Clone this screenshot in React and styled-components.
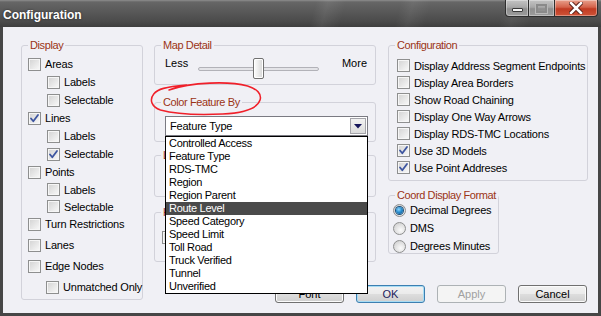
import React from 'react';
import styled, { createGlobalStyle } from 'styled-components';

const GlobalStyle = createGlobalStyle`
  html, body {
    margin: 0;
    padding: 0;
    background: #ffffff;
  }
  body {
    font-family: "Liberation Sans", Arial, sans-serif;
    font-size: 11px;
    color: #000;
  }
`;

const Window = styled.div`
  width: 601px;
  height: 316px;
  box-sizing: border-box;
  display: flex;
  flex-direction: column;
  background: #464646;
  overflow: hidden;
`;

const TitleBar = styled.div`
  height: 27px;
  flex: none;
  display: flex;
  justify-content: space-between;
  align-items: flex-start;
  background:
    linear-gradient(105deg, transparent 52%, rgba(255,255,255,0.07) 54%, transparent 57%,
      transparent 66%, rgba(255,255,255,0.06) 68%, transparent 71%,
      transparent 83%, rgba(255,255,255,0.05) 85%, transparent 88%),
    linear-gradient(to bottom, #8e8e8e 0px, #666 2px, #585858 12px, #4a4a4a 22px, #3e3e3e 27px);
`;

const Title = styled.span`
  margin: 8px 0 0 3px;
  font-size: 12px;
  font-weight: bold;
  line-height: 14px;
  color: #fff;
  text-shadow: 0 0 2px #222;
`;

const CaptionGroup = styled.div`
  display: flex;
  margin-right: 3px;
`;

const captionBg = {
  min: 'linear-gradient(to bottom, #c4c4c4 0%, #a8a8a8 45%, #8e8e8e 55%, #9c9c9c 100%)',
  max: 'linear-gradient(to bottom, #c4c4c4 0%, #a8a8a8 45%, #8e8e8e 55%, #9c9c9c 100%)',
  close: 'linear-gradient(to bottom, #e8a08c 0%, #d4624a 45%, #c03a22 55%, #d05438 100%)',
};

const CaptionButton = styled.div`
  width: ${p => p.$w}px;
  height: 17px;
  box-sizing: border-box;
  border: 1px solid #2e2e2e;
  border-top: none;
  border-left-width: ${p => (p.$kind === 'min' ? 1 : 0)}px;
  border-radius: ${p => (p.$kind === 'min' ? '0 0 0 4px' : p.$kind === 'close' ? '0 0 4px 0' : '0')};
  background: ${p => captionBg[p.$kind]};
  box-shadow: inset 0 0 0 1px rgba(255,255,255,0.35);
  display: flex;
  align-items: center;
  justify-content: center;
`;

const MinGlyph = styled.span`
  width: 11px;
  height: 4px;
  margin-top: 3px;
  box-sizing: border-box;
  background: #f4f4f4;
  border: 1px solid #3a3a3a;
  border-radius: 1px;
`;

const MaxGlyph = styled.span`
  width: 11px;
  height: 9px;
  box-sizing: border-box;
  border: 2px solid #8a8a8a;
  box-shadow: 0 0 0 1px #b8b8b8;
`;

const Body = styled.div`
  flex: 1;
  margin: 0 3px 3px;
  background: #f0f0f5;
  display: flex;
  gap: 11px;
  padding: 12px 10px 10px 18px;
  box-sizing: border-box;
`;

/* legend text sits 9px in from the group's left border, whatever the padding */
const Group = styled.fieldset`
  position: relative;
  margin: 0;
  margin-top: ${p => p.$mt || 0}px;
  padding: ${p => p.$pt || 0}px 6px 0 ${p => p.$pl}px;
  width: ${p => p.$w}px;
  height: ${p => p.$h}px;
  min-width: 0;
  box-sizing: border-box;
  border: 1px solid #d2d2da;
  border-radius: 3px;
  flex: none;

  legend {
    margin-left: ${p => 6 - p.$pl}px;
    padding: 0 2px;
    line-height: 12px;
    color: #9b3415;
    white-space: nowrap;
    letter-spacing: -0.4px;
  }
`;

const Column = styled.div`
  position: relative;
  display: flex;
  flex-direction: column;
  width: ${p => p.$w}px;
`;

const RightArea = styled.div`
  display: flex;
  flex-direction: column;
  width: 434px;
`;

const Columns = styled.div`
  display: flex;
  gap: 12px;
`;

const Row = styled.label`
  display: flex;
  align-items: center;
  gap: 4px;
  height: ${p => p.$h || 18}px;
  margin-top: ${p => p.$mt || 0}px;
  padding-left: ${p => p.$indent || 0}px;
  white-space: nowrap;
  letter-spacing: -0.2px;
`;

const Box = styled.span`
  width: 13px;
  height: 13px;
  flex: none;
  box-sizing: border-box;
  border: 1px solid #8e8f8f;
  background: linear-gradient(135deg, #d2d2d2 0%, #e8e8e8 55%, #fafafa 100%);
  box-shadow: inset 0 0 0 1px #f6f6f6;
  display: flex;
  align-items: center;
  justify-content: center;
`;

const RadioDot = styled.span`
  width: 13px;
  height: 13px;
  flex: none;
  box-sizing: border-box;
  border-radius: 50%;
  border: 1px solid #8e8f8f;
  background: radial-gradient(circle at 60% 65%, #fbfbfb 0%, #e2e2e2 50%, #c8c8c8 100%);
  display: flex;
  align-items: center;
  justify-content: center;

  &::after {
    content: '';
    display: ${p => (p.$on ? 'block' : 'none')};
    width: 7px;
    height: 7px;
    border-radius: 50%;
    background: radial-gradient(circle at 40% 35%, #8fd8ff 0%, #2a8fd0 45%, #0c4f86 100%);
    box-shadow: 0 0 0 1px #1b4f7a;
  }
`;

const Check = ({ on, label, indent, h, mt }) => (
  <Row $indent={indent} $h={h} $mt={mt}>
    <Box>
      {on && (
        <svg width="11" height="11" viewBox="0 0 11 11">
          <path d="M2 5.5 L4.3 8.3 L9 2" fill="none" stroke="#3d55a0" strokeWidth="1.8" strokeLinecap="round" strokeLinejoin="round" />
        </svg>
      )}
    </Box>
    {label && <span>{label}</span>}
  </Row>
);

const Radio = ({ on, label }) => (
  <Row $h={18}>
    <RadioDot $on={on} />
    <span>{label}</span>
  </Row>
);

const SliderRow = styled.div`
  display: flex;
  align-items: flex-start;
  padding: 6px 0 0 4px;
  line-height: 12px;
`;

const Slider = styled.div`
  position: relative;
  width: 121px;
  height: 21px;
  margin: 1px 0 0 10px;
  display: flex;
  align-items: center;
`;

const Track = styled.div`
  width: 100%;
  height: 4px;
  box-sizing: border-box;
  border: 1px solid #b2b2b8;
  border-radius: 2px;
  background: #e4e4e8;
`;

const Thumb = styled.div`
  position: absolute;
  left: 55px;
  top: 0;
  width: 11px;
  height: 21px;
  box-sizing: border-box;
  border: 1px solid #707070;
  border-radius: 2px;
  background: linear-gradient(to right, #fdfdfd 0%, #eaeaea 50%, #d6d6d6 100%);
  box-shadow: inset 0 0 0 1px #fff;
`;

const More = styled.span`
  margin-left: auto;
  margin-right: 2px;
`;

const ComboWrap = styled.div`
  position: relative;
  width: 203px;
  height: 20px;
  margin: 8px 0 0 4px;
`;

const ComboField = styled.div`
  height: 100%;
  box-sizing: border-box;
  border: 1px solid #7a7a82;
  background: #fff;
  display: flex;
  align-items: center;
  justify-content: space-between;
  padding: 0 1px 0 4px;
  letter-spacing: -0.2px;
`;

const ArrowButton = styled.span`
  width: 16px;
  height: 16px;
  box-sizing: border-box;
  border: 1px solid #a4a4aa;
  background: linear-gradient(to bottom, #f2f2f2 0%, #dcdcdc 100%);
  display: flex;
  align-items: center;
  justify-content: center;
`;

const DropList = styled.ul`
  position: absolute;
  top: 20px;
  left: 0;
  width: 203px;
  margin: 0;
  padding: 0;
  list-style: none;
  box-sizing: border-box;
  border: 1px solid #000;
  background: #fff;
  z-index: 5;
`;

const Item = styled.li`
  height: 13px;
  line-height: 13px;
  padding-left: 3px;
  letter-spacing: -0.3px;
  background: ${p => (p.$sel ? '#4a4a4a' : 'transparent')};
  color: ${p => (p.$sel ? '#fff' : '#000')};
`;

const Scribble = styled.svg`
  position: absolute;
  left: -6px;
  top: 41px;
  overflow: visible;
  pointer-events: none;
  z-index: 2;
`;

const ButtonRow = styled.div`
  margin-top: auto;
  display: flex;
  justify-content: flex-end;
  gap: 12px;
  padding-right: 1px;
`;

const Button = styled.button`
  width: 69px;
  height: 18px;
  padding: 0;
  box-sizing: border-box;
  font-family: "Liberation Sans", Arial, sans-serif;
  font-size: 11px;
  border-radius: 3px;
  border: 1px solid ${p => (p.$default ? '#3c7fb1' : p.disabled ? '#adb2b5' : '#707070')};
  background: ${p => (p.disabled
    ? '#f4f4f4'
    : 'linear-gradient(to bottom, #f2f2f2 0%, #ebebeb 48%, #dddddd 52%, #cfcfcf 100%)')};
  box-shadow: inset 0 0 0 1px ${p => (p.$default ? '#a8dcf4' : p.disabled ? '#f4f4f4' : '#fbfbfb')};
  color: ${p => (p.disabled ? '#a0a0a0' : p.$default ? '#1c1c5c' : '#000')};
`;

const items = [
  'Controlled Access', 'Feature Type', 'RDS-TMC', 'Region', 'Region Parent', 'Route Level',
  'Speed Category', 'Speed Limit', 'Toll Road', 'Truck Verified', 'Tunnel', 'Unverified',
];

const config = [
  ['Display Address Segment Endpoints', false],
  ['Display Area Borders', false],
  ['Show Road Chaining', false],
  ['Display One Way Arrows', false],
  ['Display RDS-TMC Locations', false],
  ['Use 3D Models', true],
  ['Use Point Addreses', true],
];

export default function App() {
  return (
    <Window>
      <GlobalStyle />
      <TitleBar>
        <Title>Configuration</Title>
        <CaptionGroup>
          <CaptionButton $kind="min" $w={24}><MinGlyph /></CaptionButton>
          <CaptionButton $kind="max" $w={26}><MaxGlyph /></CaptionButton>
          <CaptionButton $kind="close" $w={43}>
            <svg width="14" height="12" viewBox="0 0 14 12">
              <path d="M2 1 L12 11 M12 1 L2 11" stroke="#5a2018" strokeWidth="4.5" strokeLinecap="square" />
              <path d="M2 1 L12 11 M12 1 L2 11" stroke="#fff" strokeWidth="2.5" strokeLinecap="square" />
            </svg>
          </CaptionButton>
        </CaptionGroup>
      </TitleBar>

      <Body>
        <Group $w={122} $h={261} $pt={4} $pl={6}>
          <legend>Display</legend>
          <Check label="Areas" />
          <Check label="Labels" indent={19} />
          <Check label="Selectable" indent={19} />
          <Check label="Lines" on />
          <Check label="Labels" indent={19} />
          <Check label="Selectable" indent={19} on />
          <Check label="Points" />
          <Check label="Labels" indent={19} h={17} />
          <Check label="Selectable" indent={19} h={17} />
          <Check label="Turn Restrictions" />
          <Check label="Lanes" mt={3} />
          <Check label="Edge Nodes" mt={3} />
          <Check label="Unmatched Only" indent={18} mt={3} />
        </Group>

        <RightArea>
          <Columns>
            <Column $w={222}>
              <Group $w={222} $h={46} $pl={6}>
                <legend>Map Detail</legend>
                <SliderRow>
                  <span>Less</span>
                  <Slider>
                    <Track />
                    <Thumb />
                  </Slider>
                  <More>More</More>
                </SliderRow>
              </Group>

              <Scribble width="113" height="38" viewBox="0 0 118 38" preserveAspectRatio="none">
                <path
                  d="M22 10 C45 2, 85 1, 104 6 C114 9, 119 14, 117 20 C114 29, 98 33, 78 34 C55 35, 28 34, 13 30 C4 27, 1 20, 6 14 C10 9, 18 7, 40 5"
                  fill="none" stroke="#f0202a" strokeWidth="1.6" strokeLinecap="round"
                />
              </Scribble>

              <Group $w={222} $h={46} $mt={11} $pl={6}>
                <legend>Color Feature By</legend>
                <ComboWrap>
                  <ComboField>
                    <span>Feature Type</span>
                    <ArrowButton>
                      <svg width="8" height="5" viewBox="0 0 8 5">
                        <path d="M0 0 H8 L4 4.5 Z" fill="#14145a" />
                      </svg>
                    </ArrowButton>
                  </ComboField>
                  <DropList>
                    {items.map(t => (
                      <Item key={t} $sel={t === 'Route Level'}>{t}</Item>
                    ))}
                  </DropList>
                </ComboWrap>
              </Group>

              <Group $w={222} $h={48} $mt={7} $pl={6}>
                <legend>Labels</legend>
              </Group>

              <Group $w={222} $h={56} $mt={9} $pt={10} $pl={7}>
                <legend>Highlight</legend>
                <Check />
              </Group>
            </Column>

            <Column $w={200}>
              <Group $w={200} $h={142} $pt={6} $pl={8}>
                <legend>Configuration</legend>
                {config.map(([t, on]) => (
                  <Check key={t} label={t} on={on} h={17} />
                ))}
              </Group>

              <Group $w={111} $h={65} $mt={8} $pl={4}>
                <legend>Coord Display Format</legend>
                <Radio label="Decimal Degrees" on />
                <Radio label="DMS" />
                <Radio label="Degrees Minutes" />
              </Group>
            </Column>
          </Columns>

          <ButtonRow>
            <Button>Font</Button>
            <Button $default>OK</Button>
            <Button disabled>Apply</Button>
            <Button>Cancel</Button>
          </ButtonRow>
        </RightArea>
      </Body>
    </Window>
  );
}
